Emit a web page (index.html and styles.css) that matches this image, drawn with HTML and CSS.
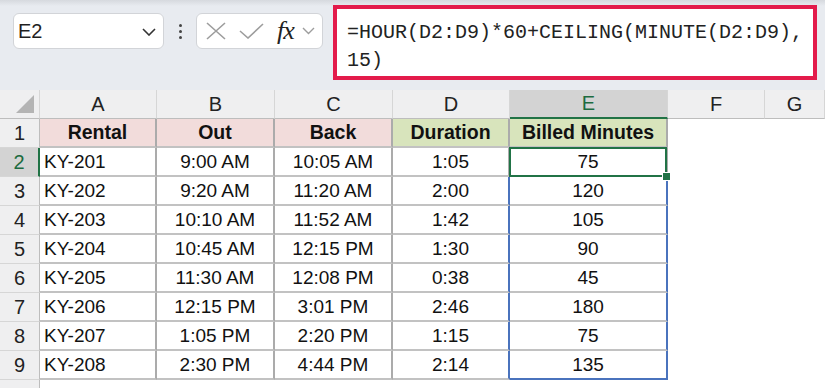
FILE: index.html
```html
<!DOCTYPE html>
<html lang="en">

<head>
    <meta charset="UTF-8">
    <title>Billed Minutes</title>
    <link rel="stylesheet" href="styles.css">
</head>

<body>
    <div class="app">
        <div class="toolbar">
            <div class="namebox">
                <span>E2</span>
                <svg class="chev" width="14" height="8" viewBox="0 0 14 8"><path d="M1 1 L7 7 L13 1" fill="none" stroke="#333" stroke-width="1.6"/></svg>
            </div>
            <div class="grip"><i></i><i></i><i></i></div>
            <div class="fxbox">
                <svg width="20" height="18" viewBox="0 0 20 18"><path d="M1 1 L19 17 M19 1 L1 17" stroke="#9d9d9d" stroke-width="1.6" fill="none"/></svg>
                <svg width="25" height="16" viewBox="0 0 25 16"><path d="M1 8 L9 15 L24 1" stroke="#9d9d9d" stroke-width="1.6" fill="none"/></svg>
                <span class="fx">fx</span>
                <svg width="13" height="8" viewBox="0 0 13 8"><path d="M1 1 L6.5 6.5 L12 1" fill="none" stroke="#9d9d9d" stroke-width="1.4"/></svg>
            </div>
            <div class="formula">
                <div>=HOUR(D2:D9)*60+CEILING(MINUTE(D2:D9),</div>
                <div>15)</div>
            </div>
        </div>

        <div class="sheet">
            <div class="ch corner"><i></i></div>
            <div class="ch">A</div>
            <div class="ch">B</div>
            <div class="ch">C</div>
            <div class="ch">D</div>
            <div class="ch sel">E</div>
            <div class="ch">F</div>
            <div class="ch">G</div>

            <div class="rh">1</div>
            <div class="c h pink">Rental</div>
            <div class="c h pink">Out</div>
            <div class="c h pink">Back</div>
            <div class="c h green">Duration</div>
            <div class="c h green">Billed Minutes</div>
            <div class="blank"></div>
            <div class="blank"></div>

            <div class="rh sel">2</div>
            <div class="c l">KY-201</div>
            <div class="c">9:00 AM</div>
            <div class="c">10:05 AM</div>
            <div class="c">1:05</div>
            <div class="c active">75<span class="handle"></span></div>
            <div class="blank"></div>
            <div class="blank"></div>

            <div class="rh">3</div>
            <div class="c l">KY-202</div>
            <div class="c">9:20 AM</div>
            <div class="c">11:20 AM</div>
            <div class="c spill-l">2:00</div>
            <div class="c spill">120</div>
            <div class="blank"></div>
            <div class="blank"></div>

            <div class="rh">4</div>
            <div class="c l">KY-203</div>
            <div class="c">10:10 AM</div>
            <div class="c">11:52 AM</div>
            <div class="c spill-l">1:42</div>
            <div class="c spill">105</div>
            <div class="blank"></div>
            <div class="blank"></div>

            <div class="rh">5</div>
            <div class="c l">KY-204</div>
            <div class="c">10:45 AM</div>
            <div class="c">12:15 PM</div>
            <div class="c spill-l">1:30</div>
            <div class="c spill">90</div>
            <div class="blank"></div>
            <div class="blank"></div>

            <div class="rh">6</div>
            <div class="c l">KY-205</div>
            <div class="c">11:30 AM</div>
            <div class="c">12:08 PM</div>
            <div class="c spill-l">0:38</div>
            <div class="c spill">45</div>
            <div class="blank"></div>
            <div class="blank"></div>

            <div class="rh">7</div>
            <div class="c l">KY-206</div>
            <div class="c">12:15 PM</div>
            <div class="c">3:01 PM</div>
            <div class="c spill-l">2:46</div>
            <div class="c spill">180</div>
            <div class="blank"></div>
            <div class="blank"></div>

            <div class="rh">8</div>
            <div class="c l">KY-207</div>
            <div class="c">1:05 PM</div>
            <div class="c">2:20 PM</div>
            <div class="c spill-l">1:15</div>
            <div class="c spill">75</div>
            <div class="blank"></div>
            <div class="blank"></div>

            <div class="rh">9</div>
            <div class="c l">KY-208</div>
            <div class="c">2:30 PM</div>
            <div class="c">4:44 PM</div>
            <div class="c spill-l">2:14</div>
            <div class="c spill last">135</div>
            <div class="blank"></div>
            <div class="blank"></div>

            <div class="rh"></div>
        </div>
    </div>
</body>

</html>
```

FILE: styles.css
```css
* {
    box-sizing: border-box;
}

body {
    margin: 0;
    font-family: "Liberation Sans", Arial, sans-serif;
    color: #1f1f1f;
    background: #fff;
    overflow: hidden;
}

.app {
    width: 825px;
    height: 388px;
    overflow: hidden;
}

/* formula bar */
.toolbar {
    display: flex;
    align-items: flex-start;
    height: 90px;
    padding: 5px 0 0 13px;
    background: linear-gradient(#d6d9de, #e8ebf0 6px);
}

.namebox {
    display: flex;
    align-items: center;
    justify-content: space-between;
    width: 151px;
    height: 36px;
    margin-top: 8px;
    padding: 0 7px 0 4px;
    background: #fff;
    border: 1px solid #d2d4d8;
    border-radius: 6px;
    font-size: 20px;
    color: #1f1f1f;
}

.namebox .chev {
    margin-top: 2px;
}

.grip {
    display: flex;
    flex-direction: column;
    align-items: center;
    justify-content: center;
    gap: 3px;
    width: 32px;
    height: 36px;
    margin-top: 8px;
}

.grip i {
    width: 3px;
    height: 3px;
    border-radius: 50%;
    background: #444;
}

.fxbox {
    display: flex;
    align-items: center;
    width: 127px;
    height: 36px;
    margin-top: 8px;
    padding: 0 4px 0 9px;
    background: #fff;
    border: 1px solid #d2d4d8;
    border-radius: 6px;
}

.fxbox svg:nth-child(2) {
    margin-left: 13px;
}

.fx {
    margin-left: 13px;
    font-family: "Liberation Serif", serif;
    font-style: italic;
    font-size: 26px;
    line-height: 1;
    color: #222;
    letter-spacing: -1px;
}

.fxbox svg:last-child {
    margin-left: 8px;
}

.formula {
    width: 484px;
    height: 75px;
    margin-left: 10px;
    padding: 10px 10px;
    background: #fff;
    border: 4px solid #e31b4b;
    font-family: "Liberation Mono", monospace;
    font-size: 20px;
    line-height: 28px;
    color: #222;
    white-space: nowrap;
}

/* grid */
.sheet {
    display: grid;
    grid-template-columns: 40px 117px 118px 118px 117px 158px 97px 60px;
    grid-auto-rows: 29px;
}

.ch {
    display: flex;
    align-items: center;
    justify-content: center;
    background: #efeff0;
    border-right: 1px solid #d6d6d6;
    border-bottom: 1px solid #bdbdbd;
    font-size: 20px;
    color: #222;
}

.ch.sel {
    background: #d3d3d3;
    color: #1d6b40;
    border-bottom: 2px solid #217346;
}

.corner {
    align-items: flex-end;
    justify-content: flex-end;
    padding: 0 5px 5px 0;
}

.corner i {
    width: 18px;
    height: 18px;
    background: #b4b4b4;
    clip-path: polygon(100% 0, 100% 100%, 0 100%);
}

.rh {
    display: flex;
    align-items: center;
    justify-content: center;
    background: #efeff0;
    border-right: 1px solid #bdbdbd;
    border-bottom: 1px solid #d6d6d6;
    font-size: 20px;
    color: #222;
}

.rh.sel {
    background: #d3d3d3;
    color: #1d6b40;
    border-right: 2px solid #217346;
}

.c {
    position: relative;
    display: flex;
    align-items: center;
    justify-content: center;
    background: #fff;
    border-right: 2px solid #ababab;
    border-bottom: 2px solid #c2c2c2;
    font-size: 19px;
    color: #111;
    white-space: nowrap;
}

.c.l {
    justify-content: flex-start;
    padding-left: 4px;
}

.c.h {
    font-weight: bold;
    font-size: 19.5px;
}

.pink {
    background: #f2dcdb;
}

.green {
    background: #d8e4bc;
}

.spill-l {
    border-right-color: #4a73bd;
}

.spill {
    border-right-color: #4a73bd;
}

.spill.last {
    border-bottom-color: #4a73bd;
}

.active::after {
    content: "";
    position: absolute;
    left: -1px;
    top: -1px;
    right: -1px;
    bottom: -2px;
    border: 2px solid #217346;
}

.handle {
    position: absolute;
    right: -5px;
    bottom: -6px;
    width: 9px;
    height: 9px;
    background: #217346;
    border: 1px solid #fff;
    z-index: 2;
}

.blank {
    background: #fff;
}
```
